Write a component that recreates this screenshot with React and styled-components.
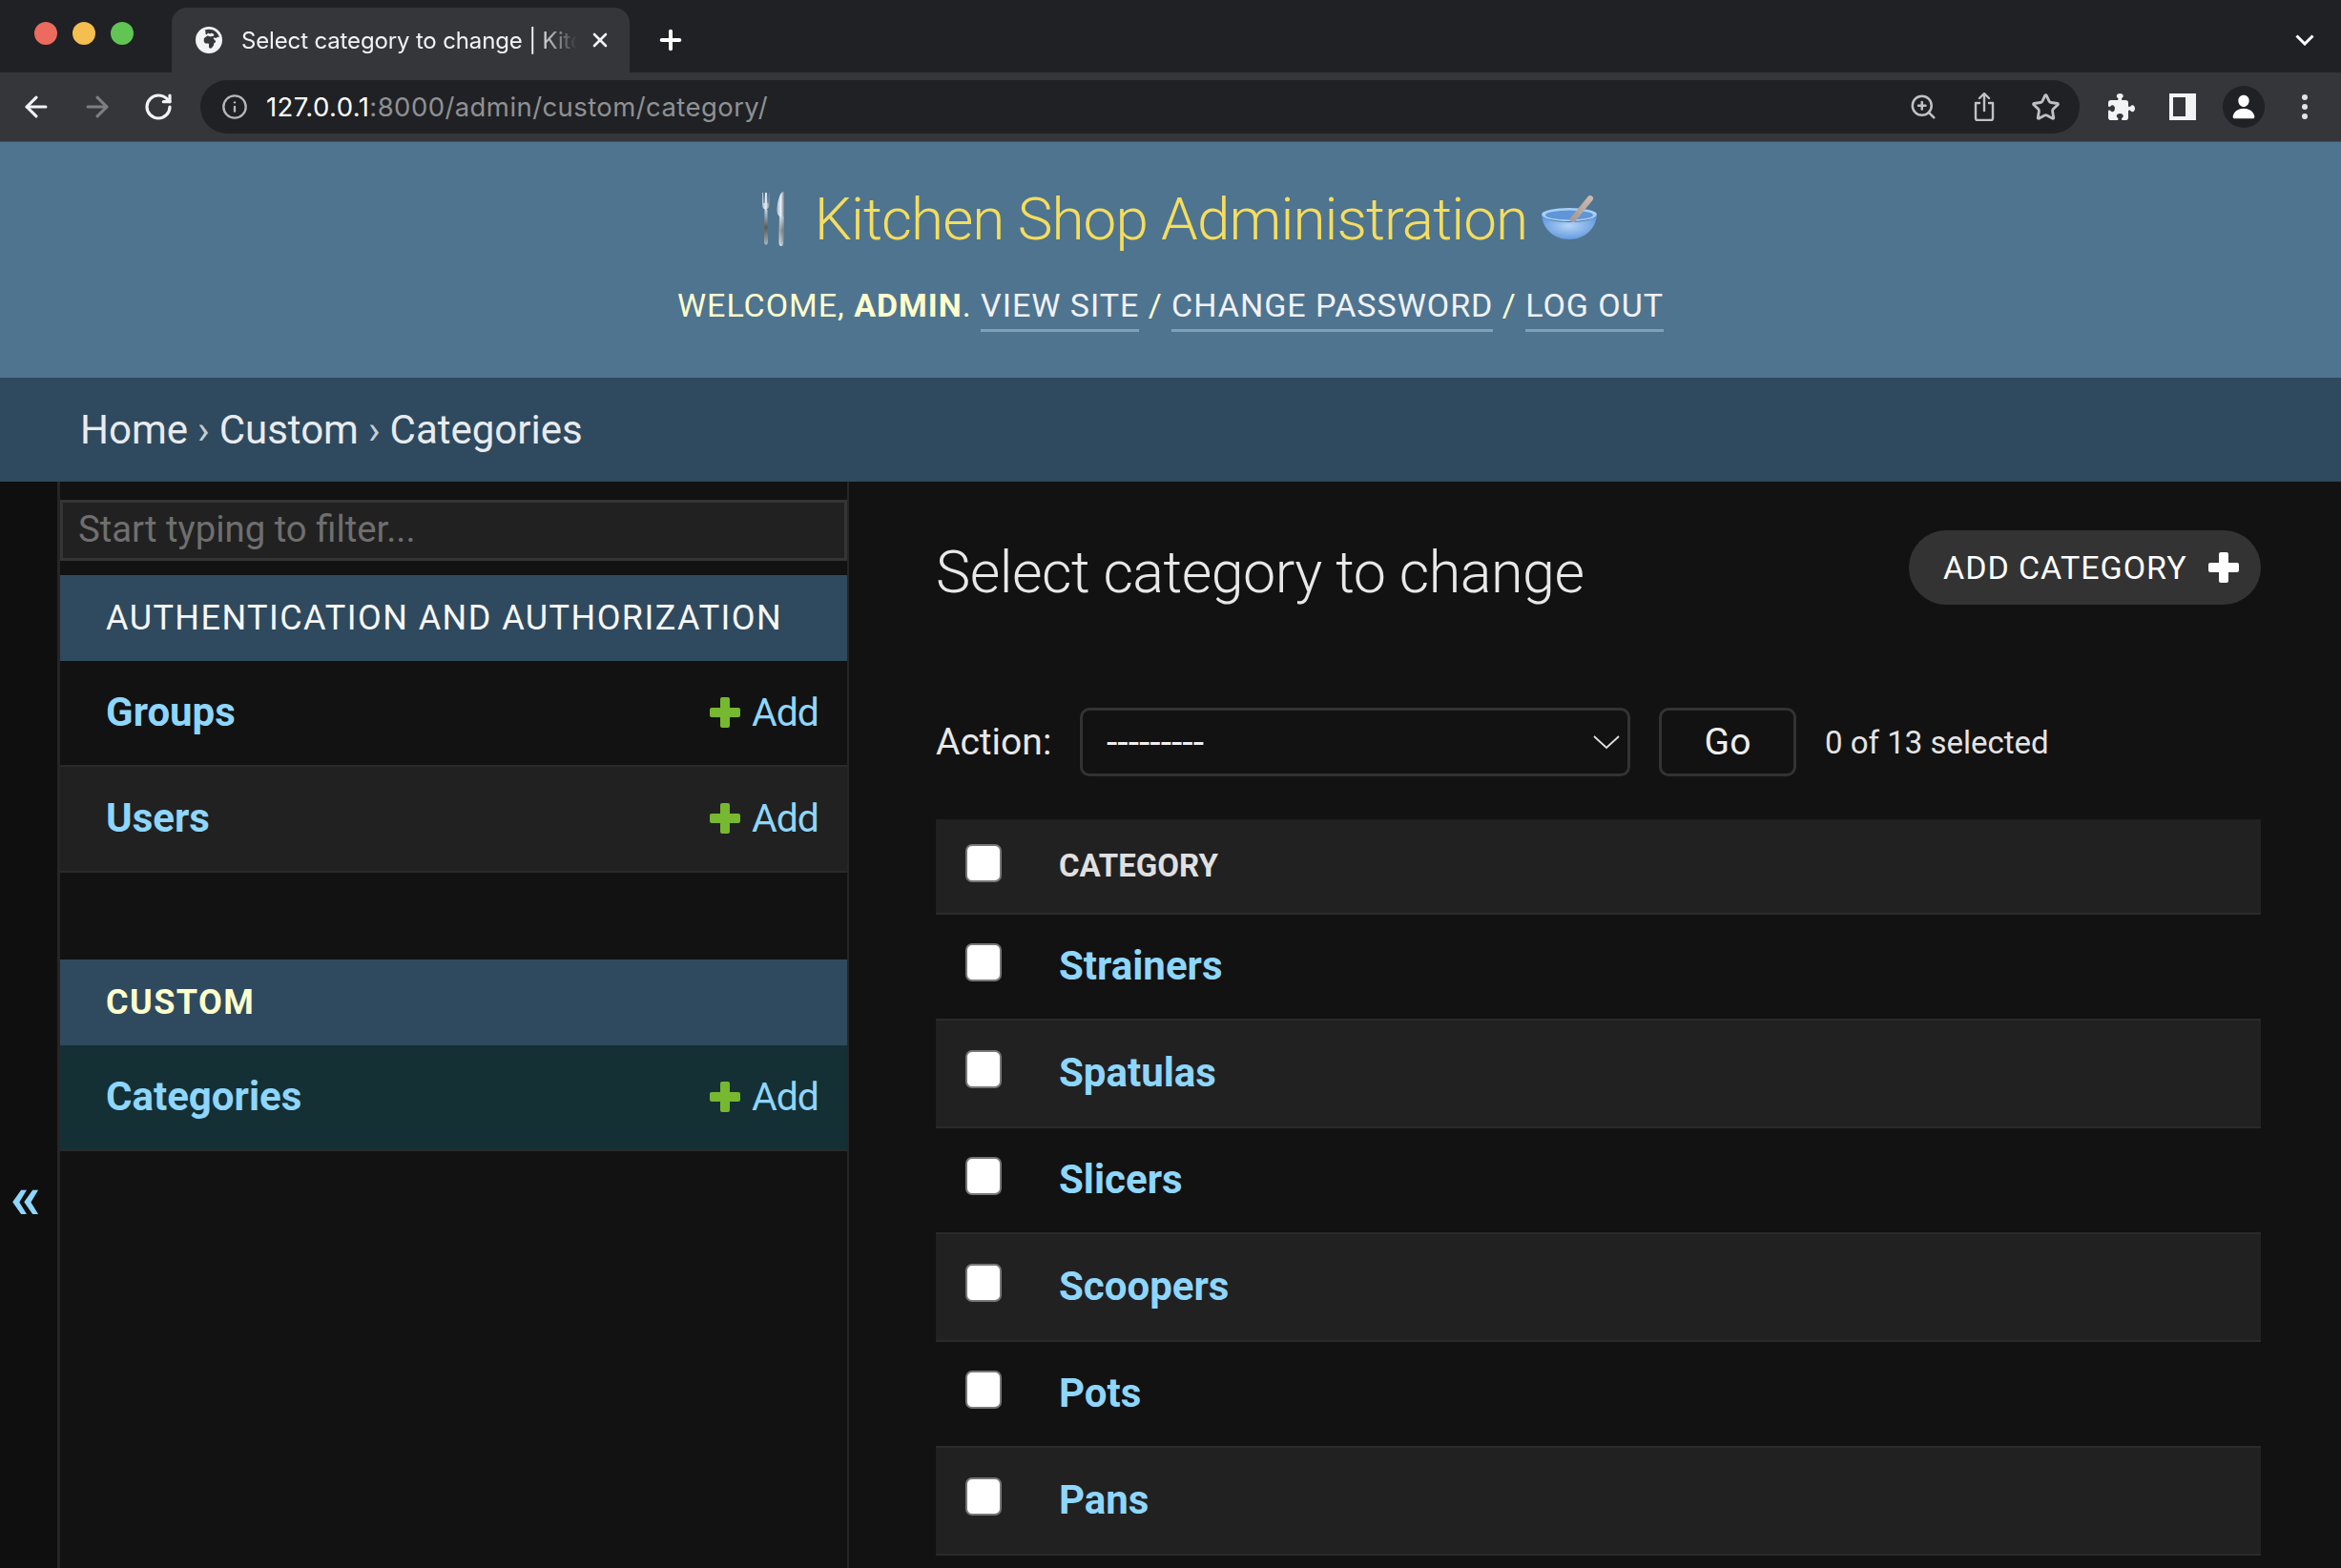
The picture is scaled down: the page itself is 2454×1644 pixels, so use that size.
import React from 'react';
import styled, { createGlobalStyle } from 'styled-components';
import { ArrowLeft, ArrowRight, RotateCw, Info, ZoomIn, Star, X, Plus } from 'lucide-react';
import { FaPuzzlePiece, FaEarthAfrica } from 'react-icons/fa6';
import { IoPerson } from 'react-icons/io5';

const Global = createGlobalStyle`
  html, body { margin: 0; padding: 0; background: #121212; }
  body { font-family: Roboto, "Liberation Sans", sans-serif; }
  * { box-sizing: border-box; }
`;

const Page = styled.div`
  width: 2454px; height: 1644px; overflow: hidden; position: relative; background: #121212; color: #eee;
`;

const TabStrip = styled.div`
  height: 76px; background: #202124; display: flex; align-items: flex-end; position: relative;
`;
const Lights = styled.div`
  width: 180px; height: 76px; display: flex; gap: 16px; padding: 23px 0 0 36px;
`;
const Light = styled.span`
  width: 24px; height: 24px; border-radius: 50%; background: ${p => p.$c};
`;
const Tab = styled.div`
  width: 480px; height: 68px; background: #35363a; border-radius: 16px 16px 0 0; display: flex; align-items: center; padding: 0 0 0 25px; color: #f1f3f4; position: relative;
`;
const TabTitle = styled.div`
  width: 352px; margin-left: 20px; font-size: 24px; white-space: nowrap; overflow: hidden; font-family: Inter, sans-serif; letter-spacing: -0.15px;
  -webkit-mask-image: linear-gradient(to right, #000 88%, transparent 100%);
  mask-image: linear-gradient(to right, #000 88%, transparent 100%);
`;
const TabClose = styled.div`
  margin-left: 12px; width: 24px; height: 24px; display: flex; align-items: center; justify-content: center;
`;
const NewTab = styled.div`
  margin-left: 25px; width: 36px; height: 68px; display: flex; align-items: center; justify-content: center; color: #fff;
`;
const StripEnd = styled.div`
  position: absolute; right: 28px; top: 36px; color: #fff; display: flex;
`;

const Toolbar = styled.div`
  height: 72px; background: #35363a; display: flex; align-items: center; padding: 0 6px; border-bottom: 0;
`;
const Slot = styled.div`
  width: 64px; height: 64px; flex: none; display: flex; align-items: center; justify-content: center; color: ${p => p.$c || '#f1f3f4'};
`;
const Address = styled.div`
  flex: 1; height: 56px; margin: 0 12px; background: #202124; border-radius: 28px; display: flex; align-items: center; padding: 0 4px 0 18px;
`;
const AddressIcon = styled.div`
  width: 36px; height: 36px; flex: none; display: flex; align-items: center; justify-content: center; color: #b5b7ba;
`;
const Url = styled.div`
  flex: 1; margin-left: 15px; font-size: 27.5px; font-family: Inter, sans-serif; letter-spacing: 0.42px; color: #8f9194; white-space: nowrap;
  b { font-weight: 400; color: #fff; }
`;
const Avatar = styled.div`
  width: 44px; height: 44px; border-radius: 50%; background: #202124; display: flex; align-items: center; justify-content: center; color: #fff;
`;
const Divider = styled.div`
  height: 1px; background: #505155;
`;

const Header = styled.header`
  height: 247px; background: #4f7490; display: flex; flex-direction: column; align-items: center; padding-top: 45px;
`;
const Brand = styled.div`
  height: 72px; display: flex; align-items: center; margin-left: 17px;
`;
const BrandArt = styled.svg`
  flex: none; margin-top: ${p => p.$mt || 0}px;
`;
const Title = styled.h1`
  margin: 0 15px 0 31px; font-size: 62px; font-weight: 300; line-height: 72px; letter-spacing: -0.93px; color: #f5dd5d; white-space: nowrap;
`;
const Tools = styled.div`
  margin-top: 32px; font-size: 34px; line-height: 44px; letter-spacing: 0.98px; color: #ffc; text-transform: uppercase; white-space: nowrap;
  strong { font-weight: 700; }
`;
const ToolLink = styled.a`
  display: inline-block; color: #f0f2f6; border-bottom: 3px solid #81a0b5; line-height: 42px; padding-bottom: 4px;
`;

const Crumbs = styled.nav`
  height: 109px; background: #2f4a5e; display: flex; align-items: center; padding-left: 84px; font-size: 42px; font-weight: 400; color: #e8ebee;
  span { color: #c5ced5; margin: 0 10px; }
`;

const Body = styled.main`
  display: flex; height: 1139px;
`;
const Toggle = styled.div`
  width: 60px; flex: none; padding: 719px 6px 0 0; text-align: center; color: #8fd6fb; font-size: 64px; line-height: 64px; background: #0f0f0f; font-weight: 700;
`;
const Sidebar = styled.aside`
  width: 830px; flex: none; border-left: 3px solid #262626; border-right: 2px solid #262626; padding-top: 19px; background: #121212;
`;
const Filter = styled.div`
  height: 64px; background: #212121; border: 3px solid #353535; margin-bottom: 15px; padding-left: 16px; font-size: 38.3px; line-height: 56px; color: #6f6f6f;
`;
const Caption = styled.div`
  height: 90px; background: #2f4a5e; padding-left: 48px; font-size: 36px; line-height: 90px; letter-spacing: 1.45px; text-transform: uppercase;
  color: ${p => p.$current ? '#ffc' : '#f7f7f7'}; font-weight: ${p => p.$current ? 700 : 400};
`;
const AppGroup = styled.div`
  margin-bottom: ${p => p.$mb || 0}px;
`;
const ModelRow = styled.div`
  height: 111px; display: flex; align-items: center; justify-content: space-between; padding: 0 30px 2px 48px; border-bottom: 2px solid #2a2a2a;
  background: ${p => p.$bg};
`;
const ModelLink = styled.a`
  font-size: 42px; font-weight: 700; color: #8ed6fb;
`;
const AddLink = styled.a`
  display: flex; align-items: center; font-size: 41px; letter-spacing: -1px; color: #8ed6fb;
`;
const PlusIcon = styled.svg`
  width: 32px; height: 32px; margin-right: 12px;
`;

const Content = styled.section`
  flex: 1; padding: 51px 84px 0 91px; overflow: hidden;
`;
const TitleRow = styled.div`
  display: flex; justify-content: space-between; height: 78px;
`;
const PageTitle = styled.h2`
  margin: 0; font-size: 61px; line-height: 88px; font-weight: 300; letter-spacing: -0.5px; color: #e8e8e8;
`;
const AddButton = styled.a`
  width: 369px; height: 78px; border-radius: 39px; background: #333; color: #fff; display: flex; align-items: center; padding-left: 36px; font-size: 34px; letter-spacing: 0.95px; white-space: nowrap;
`;
const ButtonPlus = styled.svg`
  width: 32px; height: 32px; margin-left: 22px;
`;
const ActionRow = styled.div`
  margin-top: 108px; height: 72px; display: flex; align-items: center;
`;
const ActionLabel = styled.span`
  width: 151px; font-size: 39px; color: #e8e8e8;
`;
const Select = styled.div`
  width: 577px; height: 72px; border: 3px solid #333; border-radius: 10px; display: flex; align-items: center; justify-content: space-between; padding: 0 8px 0 25px; font-size: 41px; color: #eee;
`;
const GoButton = styled.div`
  width: 144px; height: 72px; margin-left: 30px; border: 3px solid #333; border-radius: 10px; display: flex; align-items: center; justify-content: center; font-size: 39px; color: #eee;
`;
const Counter = styled.span`
  margin-left: 30px; font-size: 33px; color: #e4e4e4;
`;
const Table = styled.div`
  margin-top: 45px;
`;
const Row = styled.div`
  height: ${p => p.$h}px; display: flex; align-items: center; background: ${p => p.$alt ? '#212121' : 'transparent'}; border-bottom: 2px solid #2a2a2a; padding: 0 0 2px 31px;
`;
const Check = styled.span`
  width: 38px; height: 40px; flex: none; background: #fff; border: 2px solid #777; border-radius: 7px; margin: ${p => p.$top}px 60px 0 0;
`;
const HeadCell = styled.div`
  font-size: 33px; font-weight: 700; color: #e0e0e0; text-transform: uppercase;
`;
const RowLink = styled.a`
  font-size: 42px; font-weight: 700; color: #8ed6fb;
`;

const ThickPlus = ({ as: C = PlusIcon, color = '#76b82f' }) => (
  <C viewBox="0 0 32 32"><path d="M11 2a2 2 0 0 1 2-2h6a2 2 0 0 1 2 2v9h9a2 2 0 0 1 2 2v6a2 2 0 0 1-2 2h-9v9a2 2 0 0 1-2 2h-6a2 2 0 0 1-2-2v-9H2a2 2 0 0 1-2-2v-6a2 2 0 0 1 2-2h9z" fill={color} /></C>
);

const ForkKnife = () => (
  <BrandArt width="26" height="58" viewBox="0 0 26 58">
    <defs>
      <linearGradient id="steel" x1="0" x2="1" y1="0" y2="0"><stop offset="0" stopColor="#aebccb"/><stop offset="0.5" stopColor="#e8eef5"/><stop offset="1" stopColor="#67727d"/></linearGradient>
      <linearGradient id="handle" x1="0" x2="0" y1="0" y2="1"><stop offset="0" stopColor="#bcd2e8"/><stop offset="0.5" stopColor="#5d5a58"/><stop offset="1" stopColor="#aab4bd"/></linearGradient>
    </defs>
    <path d="M2 1v12c0 3 1 5 3 6h1c2-1 4-3 4-6V1h-1l-.5 11h-1L7 1H5l-.5 11h-1L3 1z" fill="url(#steel)"/>
    <path d="M4.5 19h3L8 52c.3 5-4.300 5-4 0z" fill="url(#handle)"/>
    <path d="M24 0c1 0 1.500 1 1.500 3l-.5 24-.5 27c0 4-5 4-5 0l.5-28c-2-2-2.500-4-2.500-7 0-7 3-19 6.500-19z" fill="url(#steel)"/>
    <path d="M20 26h4.500L24 54c0 2.500-3.500 2.500-3.500 0z" fill="url(#handle)" opacity=".6"/>
  </BrandArt>
);

const Bowl = () => (
  <BrandArt $mt={-4} width="58" height="46" viewBox="0 0 58 46">
    <defs>
      <radialGradient id="bowl" cx="0.5" cy="0.45" r="0.6"><stop offset="0" stopColor="#b5d4f6"/><stop offset="1" stopColor="#5b95de"/></radialGradient>
      <linearGradient id="wood" x1="0" x2="1" y1="1" y2="0"><stop offset="0" stopColor="#a79a9a"/><stop offset="1" stopColor="#cbb9ac"/></linearGradient>
    </defs>
    <ellipse cx="29" cy="20" rx="29" ry="7" fill="#a9cdf4"/>
    <ellipse cx="29" cy="20.500" rx="25" ry="5" fill="#5e96d8"/>
    <path d="M33 25L51 3" stroke="url(#wood)" strokeWidth="6" strokeLinecap="round" fill="none"/>
    <path d="M0 20c1 15 13 26 29 26s28-11 29-26c-2 5-14 8-29 8S2 25 0 20z" fill="url(#bowl)"/>
  </BrandArt>
);

const rows = ['Strainers', 'Spatulas', 'Slicers', 'Scoopers', 'Pots', 'Pans'];

export default function App() {
  return (
    <Page>
      <Global />
      <TabStrip>
        <Lights>
          <Light $c="#ed6a5e" /><Light $c="#f4bf4f" /><Light $c="#61c554" />
        </Lights>
        <Tab>
          <FaEarthAfrica size={28} />
          <TabTitle>Select category to change | Kitchen Shop</TabTitle>
          <TabClose><X size={24} strokeWidth={2.6} /></TabClose>
        </Tab>
        <NewTab><Plus size={32} strokeWidth={3} /></NewTab>
        <StripEnd>
          <svg width="20" height="12" viewBox="0 0 20 12" fill="none" stroke="currentColor" strokeWidth="3"><path d="M1.500 1.500L10 10l8.500-8.500" /></svg>
        </StripEnd>
      </TabStrip>
      <Toolbar>
        <Slot><ArrowLeft size={34} strokeWidth={2.2} /></Slot>
        <Slot $c="#7e7f82"><ArrowRight size={34} strokeWidth={2.2} /></Slot>
        <Slot><RotateCw size={32} strokeWidth={2.4} /></Slot>
        <Address>
          <AddressIcon><Info size={28} strokeWidth={2} /></AddressIcon>
          <Url><b>127.0.0.1</b>:8000/admin/custom/category/</Url>
          <Slot $c="#c0c1c3"><ZoomIn size={30} strokeWidth={2} /></Slot>
          <Slot $c="#c0c1c3">
            <svg width="24" height="30" viewBox="0 0 24 30" fill="none" stroke="currentColor" strokeWidth="2.4" strokeLinecap="round" strokeLinejoin="round">
              <path d="M7 11H3v16a2 2 0 0 0 2 2h14a2 2 0 0 0 2-2V11h-4M12 19V2M7 6l5-5 5 5" />
            </svg>
          </Slot>
          <Slot $c="#c0c1c3"><Star size={31} strokeWidth={2.2} /></Slot>
        </Address>
        <Slot $c="#f1f3f4"><FaPuzzlePiece size={28} /></Slot>
        <Slot>
          <svg width="28" height="28" viewBox="0 0 28 28"><path fillRule="evenodd" d="M0 0h28v28H0zM4 4v20h13V4z" fill="#f1f3f4" /></svg>
        </Slot>
        <Slot><Avatar><IoPerson size={28} /></Avatar></Slot>
        <Slot>
          <svg width="8" height="28" viewBox="0 0 8 28" fill="#e4e4e6"><circle cx="4" cy="4" r="3"/><circle cx="4" cy="14" r="3"/><circle cx="4" cy="24" r="3"/></svg>
        </Slot>
      </Toolbar>
      <Divider />
      <Header>
        <Brand>
          <ForkKnife />
          <Title>Kitchen Shop Administration</Title>
          <Bowl />
        </Brand>
        <Tools>
          Welcome, <strong>admin</strong>. <ToolLink>View site</ToolLink> / <ToolLink>Change password</ToolLink> / <ToolLink>Log out</ToolLink>
        </Tools>
      </Header>
      <Crumbs>Home<span>›</span>Custom<span>›</span>Categories</Crumbs>
      <Body>
        <Toggle>«</Toggle>
        <Sidebar>
          <Filter>Start typing to filter...</Filter>
          <AppGroup $mb={91}>
            <Caption>Authentication and Authorization</Caption>
            <ModelRow $bg="transparent"><ModelLink>Groups</ModelLink><AddLink><ThickPlus />Add</AddLink></ModelRow>
            <ModelRow $bg="#212121"><ModelLink>Users</ModelLink><AddLink><ThickPlus />Add</AddLink></ModelRow>
          </AppGroup>
          <AppGroup>
            <Caption $current>Custom</Caption>
            <ModelRow $bg="#143035"><ModelLink>Categories</ModelLink><AddLink><ThickPlus />Add</AddLink></ModelRow>
          </AppGroup>
        </Sidebar>
        <Content>
          <TitleRow>
            <PageTitle>Select category to change</PageTitle>
            <AddButton>ADD CATEGORY<ThickPlus as={ButtonPlus} color="#fff" /></AddButton>
          </TitleRow>
          <ActionRow>
            <ActionLabel>Action:</ActionLabel>
            <Select>
              ---------
              <svg width="28" height="15" viewBox="0 0 28 15" fill="none" stroke="#e0e0e0" strokeWidth="1.8"><path d="M1 1l13 12L27 1" /></svg>
            </Select>
            <GoButton>Go</GoButton>
            <Counter>0 of 13 selected</Counter>
          </ActionRow>
          <Table>
            <Row $h={100} $alt><Check $top={-4} /><HeadCell>Category</HeadCell></Row>
            {rows.map((r, i) => (
              <Row key={r} $h={i % 2 ? 113 : 111} $alt={i % 2 === 1}><Check $top={-8} /><RowLink>{r}</RowLink></Row>
            ))}
          </Table>
        </Content>
      </Body>
    </Page>
  );
}
